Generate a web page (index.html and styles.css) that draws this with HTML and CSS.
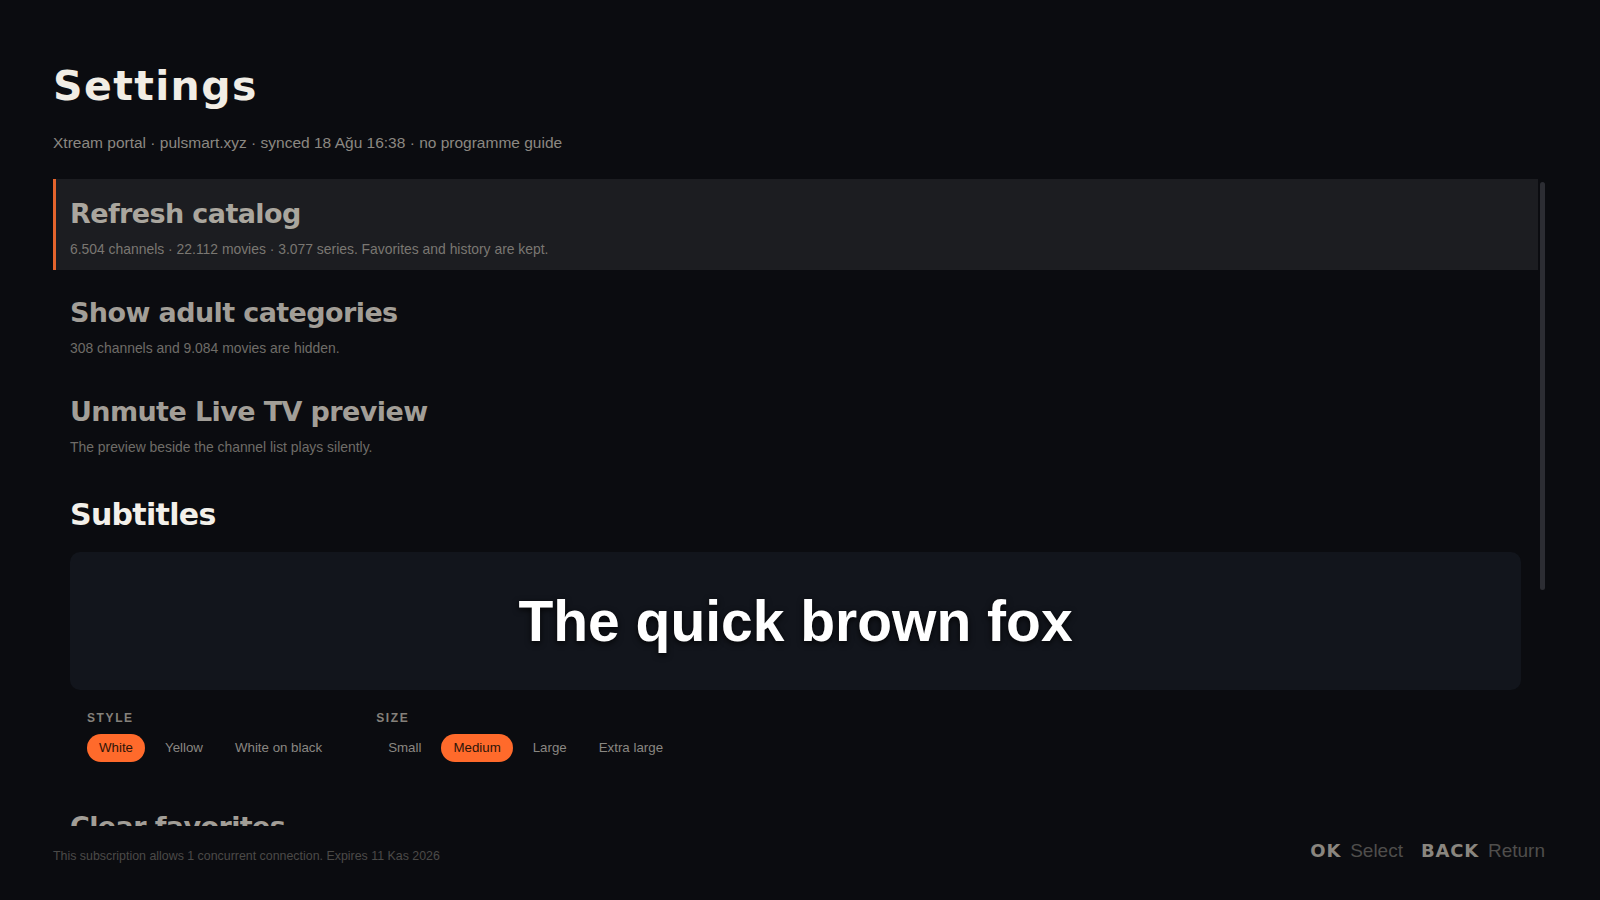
FILE: index.html
```html
<!DOCTYPE html>
<html lang="en">
<head>
<meta charset="utf-8">
<title>Settings</title>
<link rel="stylesheet" href="styles.css">
</head>
<body>
<div class="screen">
  <header class="head">
    <h1 class="title">Settings</h1>
    <p class="meta">Xtream portal · pulsmart.xyz · synced 18 Ağu 16:38 · no programme guide</p>
  </header>

  <div class="body">
    <div class="list">
      <div class="row is-focused">
        <div class="row-title">Refresh catalog</div>
        <div class="row-desc">6.504 channels · 22.112 movies · 3.077 series. Favorites and history are kept.</div>
      </div>
      <div class="row">
        <div class="row-title">Show adult categories</div>
        <div class="row-desc">308 channels and 9.084 movies are hidden.</div>
      </div>
      <div class="row">
        <div class="row-title">Unmute Live TV preview</div>
        <div class="row-desc">The preview beside the channel list plays silently.</div>
      </div>

      <section class="subs">
        <h2 class="subs-title">Subtitles</h2>
        <div class="preview"><span class="preview-text">The quick brown fox</span></div>
        <div class="opts">
          <div class="opt-group">
            <div class="opt-label">STYLE</div>
            <div class="chips">
              <span class="chip is-on">White</span>
              <span class="chip">Yellow</span>
              <span class="chip">White on black</span>
            </div>
          </div>
          <div class="opt-group">
            <div class="opt-label">SIZE</div>
            <div class="chips">
              <span class="chip">Small</span>
              <span class="chip is-on">Medium</span>
              <span class="chip">Large</span>
              <span class="chip">Extra large</span>
            </div>
          </div>
        </div>
      </section>

      <div class="row">
        <div class="row-title">Clear favorites</div>
      </div>
    </div>
    <div class="scroll"><div class="thumb"></div></div>
  </div>

  <footer class="foot">
    <div class="foot-note">This subscription allows 1 concurrent connection. Expires 11 Kas 2026</div>
    <div class="hints">
      <span class="hint"><span class="key">OK</span><span class="hint-label">Select</span></span>
      <span class="hint"><span class="key">BACK</span><span class="hint-label">Return</span></span>
    </div>
  </footer>
</div>
</body>
</html>
```

FILE: styles.css
```css
html, body {
  margin: 0;
  padding: 0;
  background: #0b0c10;
}

.screen {
  height: 900px;
  box-sizing: border-box;
  padding: 62px 55px 0 53px;
  display: flex;
  flex-direction: column;
  overflow: hidden;
}

.title {
  margin: 0;
  font: 700 41px/48px "DejaVu Sans", sans-serif;
  letter-spacing: 1.4px;
  color: #f1ede5;
}

.meta {
  margin: 23px 0 0;
  font: 400 15.5px/20px "Liberation Sans", Arial, sans-serif;
  color: #8b8882;
}

.body {
  margin-top: 26px;
  height: 647px;
  flex: none;
  display: flex;
}

.list {
  flex: 1;
  min-width: 0;
  overflow: hidden;
  display: flex;
  flex-direction: column;
  gap: 8px;
}

.row {
  flex: none;
  height: 91px;
  box-sizing: border-box;
  padding: 19px 16px 12px 14px;
  border-left: 3px solid transparent;
}

.row.is-focused {
  background: #1c1d21;
  border-left-color: #e4642d;
}

.row-title {
  font: 700 27px/32px "DejaVu Sans", sans-serif;
  letter-spacing: -0.6px;
  color: #a29e97;
  white-space: nowrap;
}

.row.is-focused .row-title {
  color: #aaa69e;
}

.row-desc {
  margin-top: 10px;
  font: 400 13.9px/18px "Liberation Sans", Arial, sans-serif;
  color: #6f6c68;
  white-space: nowrap;
}

.row.is-focused .row-desc {
  color: #7a7772;
}

.subs {
  flex: none;
  padding: 22px 17px;
}

.subs-title {
  margin: 0;
  font: 700 30px/34px "DejaVu Sans", sans-serif;
  letter-spacing: -0.7px;
  color: #f3f0ea;
}

.preview {
  margin-top: 20px;
  height: 138px;
  border-radius: 10px;
  background: #12151c;
  display: flex;
  align-items: center;
  justify-content: center;
}

.preview-text {
  font: 700 57px/1 "Liberation Sans", Arial, sans-serif;
  color: #ffffff;
  text-shadow: 0 2px 6px rgba(0, 0, 0, 0.85);
}

.opts {
  margin: 20px 0 0 17px;
  display: flex;
  gap: 42px;
}

.opt-label {
  font: 700 12px/16px "Liberation Sans", Arial, sans-serif;
  letter-spacing: 1.6px;
  color: #85817b;
}

.chips {
  margin-top: 8px;
  display: flex;
  gap: 8px;
}

.chip {
  height: 28px;
  padding: 0 12px;
  border-radius: 14px;
  font: 400 13.3px/28px "Liberation Sans", Arial, sans-serif;
  color: #8a8782;
  white-space: nowrap;
}

.chip.is-on {
  background: #ff6a2b;
  color: #2e1408;
}

.scroll {
  flex: none;
  width: 5px;
  margin-left: 2px;
  padding-top: 3px;
}

.thumb {
  height: 408px;
  background: #2c2d33;
  border-radius: 3px;
}

.foot {
  margin-top: 13px;
  display: flex;
  justify-content: space-between;
  align-items: flex-start;
}

.foot-note {
  margin-top: 9px;
  font: 400 12.4px/16px "Liberation Sans", Arial, sans-serif;
  color: #4b4a48;
}

.hints {
  display: flex;
  gap: 18px;
  font: 400 19px/24px "Liberation Sans", Arial, sans-serif;
  color: #4f4e4c;
}

.hint {
  display: flex;
  align-items: baseline;
  gap: 9px;
}

.key {
  font: 700 18px/24px "DejaVu Sans", sans-serif;
  letter-spacing: 0.8px;
  color: #8a867f;
}
```
